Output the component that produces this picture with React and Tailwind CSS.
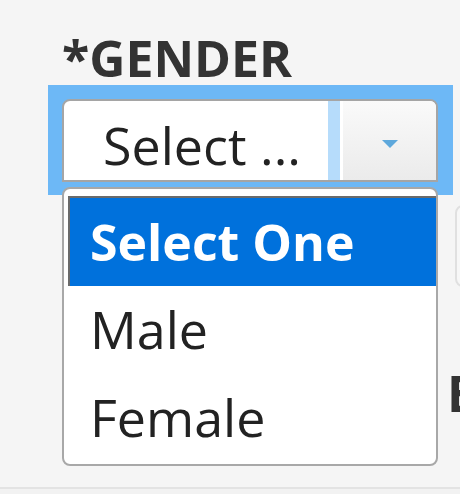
import React from "react";

// ─────────────────────────────────────────────
// DATA
// ─────────────────────────────────────────────
const options = [
  { id: 1, label: "Select One", selected: true },
  { id: 2, label: "Male", selected: false },
  { id: 3, label: "Female", selected: false },
];

export default function App() {
  return (
    <div
      className="w-[460px] h-[494px] bg-[#f5f5f5] overflow-hidden flex flex-col"
      style={{ fontFamily: '"Open Sans", "Noto Sans", sans-serif' }}
    >
      <div className="flex-1 flex">
        {/* LEFT COLUMN: GENDER FIELD */}
        <div className="w-[405px] shrink-0 ml-[48px] flex flex-col">
          <label className="pl-[14px] mt-[33px] mb-[2px] text-[50px] leading-[50px] font-bold text-[#333]">
            *GENDER
          </label>

          {/* focus ring */}
          <div className="relative bg-[#6db8f6] pt-[14px] pl-[14px] pr-[15px] pb-[13px]">
            {/* SELECT */}
            <div className="h-[83px] w-[376px] border-2 border-[#a5a5a5] rounded-t-[8px] bg-white flex overflow-hidden">
              <div className="w-[264px] pl-[39px] pt-[19px] text-[52px] leading-[50px] text-[#222] whitespace-nowrap">
                Select ...
              </div>
              <div className="w-[12px] bg-[#b6dcfb]" />
              <div className="w-[3px] bg-white" />
              <div className="flex-1 bg-gradient-to-b from-[#fafafa] to-[#ebebeb] flex items-center justify-center pt-[6px]">
                <svg width="16" height="8" viewBox="0 0 16 8">
                  <polygon points="0,0 16,0 8,8" fill="#5ea8dc" />
                </svg>
              </div>
            </div>

            {/* DROPDOWN LIST */}
            <ul className="absolute left-[14px] top-[102px] w-[376px] bg-white border-2 border-[#a8a8a8] rounded-[8px] pt-[7px] pb-[2px] pl-[4px] z-10">
              {options.map((opt) =>
                opt.selected ? (
                  <li
                    key={opt.id}
                    className="h-[90px] bg-[#0071dc] border-t-2 border-l-2 border-[#6b6b6b] pl-[20px] text-[50px] leading-[88px] font-bold text-white"
                  >
                    {opt.label}
                  </li>
                ) : (
                  <li
                    key={opt.id}
                    className="h-[88px] pl-[22px] text-[52px] leading-[86px] text-[#222]"
                  >
                    {opt.label}
                  </li>
                )
              )}
            </ul>
          </div>
        </div>

        {/* RIGHT COLUMN (clipped) */}
        <div className="-ml-[6px] flex flex-col">
          <div className="ml-[8px] mt-[205px] w-[60px] h-[82px] border-2 border-[#e0e0e0] rounded-[8px] bg-[#f7f7f7]" />
          <div className="mt-[81px] text-[50px] leading-[50px] font-bold text-[#333]">
            E
          </div>
        </div>
      </div>

      <div className="h-[7px] border-t-2 border-[#e3e3e3] bg-[#f2f2f2]" />
    </div>
  );
}
